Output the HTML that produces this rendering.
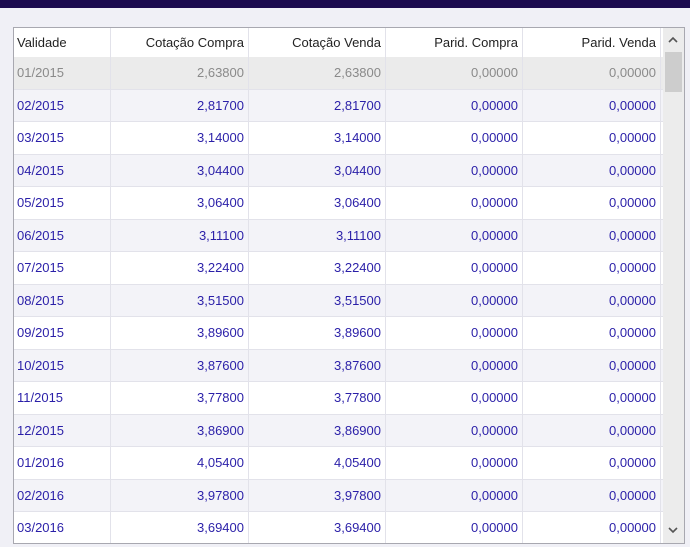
<!DOCTYPE html><html><head><style>
body{margin:0;width:690px;height:547px;background:#f0f0f6;overflow:hidden;font-family:"Liberation Sans",sans-serif;font-size:13px;position:relative}
.top{position:absolute;left:0;top:0;width:690px;height:8px;background:#1c0b4f}
.box{position:absolute;left:13px;top:27px;width:670px;height:515px;border:1px solid #a8a8b0;background:#fff;overflow:hidden}
.hdr,.r{position:absolute;left:0;width:649px;display:flex}
.hdr{top:0;height:29px;background:#fff;color:#222}
.r{height:32.5px;border-bottom:1px solid #e2e2ea;box-sizing:border-box;color:#2a1fa8}
.r.o{background:#f3f3f8}
.r.s{background:#ebebeb;color:#8a8a8a}
.c{box-sizing:border-box;border-right:1px solid #e2e2ea;display:flex;align-items:center;justify-content:flex-end;padding-right:4px;white-space:nowrap}
.c:first-child{justify-content:flex-start;padding-left:3px;width:97px}
.w{width:138px}.w2{width:137px}
.sb{position:absolute;left:649px;top:0;width:21px;height:515px;background:#ececec}
.th{position:absolute;left:2px;top:24px;width:17px;height:40px;background:#cdcdcd}
.ar{position:absolute;left:4px;width:12px;height:12px}
</style></head><body>
<div class="top"></div>
<div class="box">
<div class="hdr"><div class="c">Validade</div><div class="c w">Cotação Compra</div><div class="c w2">Cotação Venda</div><div class="c w2">Parid. Compra</div><div class="c w">Parid. Venda</div></div>
<div id="rows"></div>
<div class="sb"><svg class="ar" style="top:6px" viewBox="0 0 12 12"><path d="M2 8 L6 4 L10 8" fill="none" stroke="#555" stroke-width="1.6"/></svg><div class="th"></div><svg class="ar" style="top:496px" viewBox="0 0 12 12"><path d="M2 4 L6 8 L10 4" fill="none" stroke="#555" stroke-width="1.6"/></svg></div>
</div>
<script>
var d=[["01/2015","2,63800"],["02/2015","2,81700"],["03/2015","3,14000"],["04/2015","3,04400"],["05/2015","3,06400"],["06/2015","3,11100"],["07/2015","3,22400"],["08/2015","3,51500"],["09/2015","3,89600"],["10/2015","3,87600"],["11/2015","3,77800"],["12/2015","3,86900"],["01/2016","4,05400"],["02/2016","3,97800"],["03/2016","3,69400"]];
var h="";d.forEach(function(x,i){var cl=i==0?"r s":(i%2?"r o":"r");h+='<div class="'+cl+'" style="top:'+(29+i*32.5)+'px"><div class="c">'+x[0]+'</div><div class="c w">'+x[1]+'</div><div class="c w2">'+x[1]+'</div><div class="c w2">0,00000</div><div class="c w">0,00000</div></div>';});
document.getElementById("rows").innerHTML=h;
</script>
</body></html>
